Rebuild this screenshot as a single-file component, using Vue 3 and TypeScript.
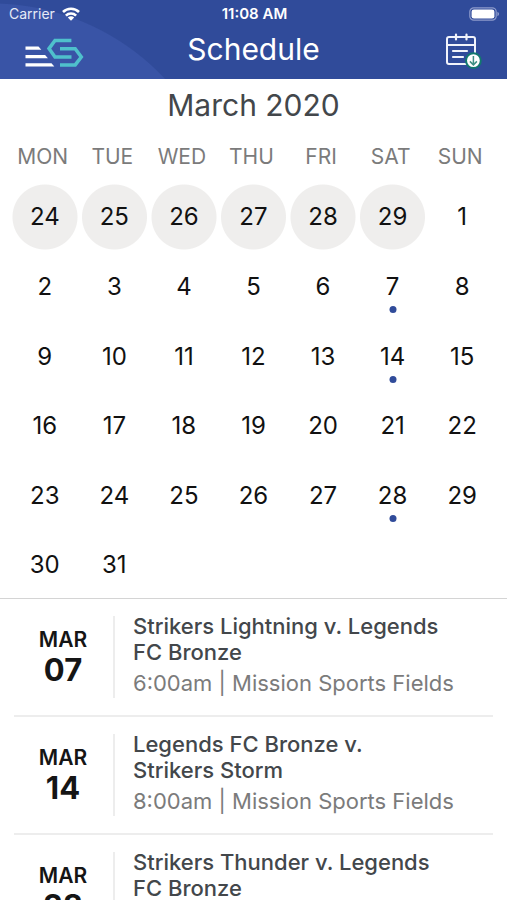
<script setup lang="ts">
interface Day {
  key: string
  label: number
  outside: boolean
  hasEvent: boolean
}

interface ScheduleEvent {
  month: string
  day: string
  title: string
  detail?: string
}

const weekdays: string[] = ['MON', 'TUE', 'WED', 'THU', 'FRI', 'SAT', 'SUN']
const eventDays: number[] = [7, 14, 28]

const previous: Day[] = [24, 25, 26, 27, 28, 29].map((n) => ({
  key: `feb-${n}`,
  label: n,
  outside: true,
  hasEvent: false,
}))

const current: Day[] = Array.from({ length: 31 }, (_, i) => ({
  key: `mar-${i + 1}`,
  label: i + 1,
  outside: false,
  hasEvent: eventDays.includes(i + 1),
}))

const days: Day[] = [...previous, ...current]
const weeks: Day[][] = []
for (let i = 0; i < days.length; i += 7) {
  weeks.push(days.slice(i, i + 7))
}

const events: ScheduleEvent[] = [
  {
    month: 'MAR',
    day: '07',
    title: 'Strikers Lightning v. Legends FC Bronze',
    detail: '6:00am | Mission Sports Fields',
  },
  {
    month: 'MAR',
    day: '14',
    title: 'Legends FC Bronze v. Strikers Storm',
    detail: '8:00am | Mission Sports Fields',
  },
  {
    month: 'MAR',
    day: '28',
    title: 'Strikers Thunder v. Legends FC Bronze',
  },
]
</script>

<template>
  <div class="screen">
    <header class="header">
      <div class="status">
        <div class="carrier">
          <span>Carrier</span>
          <svg width="18" height="14" viewBox="0 0 18 14" aria-hidden="true">
            <g fill="none" stroke="#fff" stroke-width="2.6">
              <path d="M1 5C5.4 .6 12.6 .6 17 5" />
              <path d="M3.9 8.6c2.8-2.8 7.4-2.8 10.2 0" />
            </g>
            <path d="M5.8 10.6c1.8-1.7 4.6-1.7 6.4 0L9 13.8z" fill="#fff" />
          </svg>
        </div>
        <span class="time">11:08 AM</span>
        <div class="battery">
          <svg width="31" height="14" viewBox="0 0 31 14" aria-hidden="true">
            <rect x=".8" y=".8" width="26.4" height="12.4" rx="4" fill="none" stroke="#8d9bcb" stroke-width="1.2" />
            <rect x="2.6" y="2.4" width="22.8" height="9.2" rx="2.4" fill="#fff" />
            <path d="M28.4 4.8c2.2.8 2.2 3.6 0 4.4z" fill="#8d9bcb" />
          </svg>
        </div>
      </div>
      <div class="nav">
        <a class="logo" href="#" aria-label="Home">
          <svg width="60" height="30" viewBox="0 0 60 30" aria-hidden="true">
            <g fill="#fff">
              <path d="M1.5 8.5h13l2.8 3.3H1.5z" />
              <path d="M1.5 16.9h19.6l2.8 3.3H1.5z" />
              <path d="M1.5 25.3h26l2.8 3.3H1.5z" />
            </g>
            <g fill="none" stroke="#4fc0cc" stroke-width="3.5">
              <path d="M47.4 2.4H31l-6 8.2 6 8.4H47.5" />
              <path d="M36 10.8H51.2l6.1 8.2-6.1 7.9H36" />
            </g>
          </svg>
        </a>
        <h1 class="title">Schedule</h1>
        <button class="export" type="button" aria-label="Download calendar">
          <svg width="38" height="38" viewBox="0 0 38 38" aria-hidden="true">
            <g fill="none" stroke="#f1f3fb" stroke-width="2" stroke-linecap="round">
              <rect x="2" y="5" width="28" height="27" rx="2" />
              <path d="M2 13h28M11 2.5v5M21.5 2.5v5M8 19h14M8 25h10" stroke-width="2.2" />
            </g>
            <circle cx="28.4" cy="28.6" r="7.4" fill="#fff" stroke="#12786f" stroke-width="2" />
            <path d="M28.4 24v8.6M24.9 29.4l3.5 3.5 3.5-3.5" fill="none" stroke="#3f8f83" stroke-width="1.5" />
          </svg>
        </button>
      </div>
    </header>

    <main class="main">
      <section class="calendar">
        <h2 class="month">March 2020</h2>
        <table class="grid">
          <thead>
            <tr>
              <th v-for="name in weekdays" :key="name" scope="col">{{ name }}</th>
            </tr>
          </thead>
          <tbody>
            <tr v-for="(week, index) in weeks" :key="index">
              <td v-for="day in week" :key="day.key">
                <button type="button" class="day" :class="{ outside: day.outside, marked: day.hasEvent }">
                  {{ day.label }}
                </button>
              </td>
            </tr>
          </tbody>
        </table>
      </section>

      <ul class="events">
        <li v-for="event in events" :key="event.day" class="event">
          <div class="date">
            <span class="date-month">{{ event.month }}</span>
            <span class="date-day">{{ event.day }}</span>
          </div>
          <div class="info">
            <h3 class="event-title">{{ event.title }}</h3>
            <p v-if="event.detail" class="event-detail">{{ event.detail }}</p>
          </div>
        </li>
      </ul>
    </main>
  </div>
</template>

<style>
body {
  margin: 0;
  background: #fff;
}
</style>

<style scoped>
.screen {
  display: flex;
  flex-direction: column;
  height: 100vh;
  overflow: hidden;
  background: #fff;
  font-family: Inter, 'Liberation Sans', sans-serif;
}

.header {
  flex: none;
  background: radial-gradient(circle at -9px 242px, #3954a6 238px, #304b9a 239px);
  color: #fff;
}

.status {
  display: grid;
  grid-template-columns: 1fr auto 1fr;
  align-items: center;
  height: 27px;
  padding: 0 7px 0 9px;
  font-size: 14px;
}

.carrier {
  display: flex;
  align-items: center;
  gap: 7px;
  color: #e6eaf6;
}

.time {
  font-size: 15px;
  font-weight: 600;
}

.battery {
  display: flex;
  justify-content: flex-end;
}

.nav {
  display: grid;
  grid-template-columns: 1fr auto 1fr;
  align-items: center;
  height: 52px;
  padding: 0 24px;
}

.logo {
  display: flex;
}

.title {
  margin: 0;
  padding-bottom: 8px;
  font-size: 30px;
  line-height: 36px;
  font-weight: 400;
}

.export {
  display: flex;
  justify-self: end;
  padding: 0 0 4px;
  border: 0;
  background: none;
  cursor: pointer;
}

.main {
  flex: 1;
  min-height: 0;
  overflow-y: auto;
  scrollbar-width: none;
}

.calendar {
  padding: 0 10px;
  border-bottom: 1px solid #d4d4d4;
}

.month {
  margin: 0;
  font-size: 30px;
  line-height: 52px;
  font-weight: 400;
  text-align: center;
  color: #43474b;
}

.grid {
  width: 100%;
  margin-bottom: -2px;
  table-layout: fixed;
  border-collapse: collapse;
}

.grid th {
  height: 51px;
  padding: 0 4px 0 0;
  font-size: 21px;
  font-weight: 400;
  color: #7b7b7b;
}

.grid td {
  padding: 0;
}

.day {
  position: relative;
  display: flex;
  align-items: center;
  justify-content: center;
  width: 100%;
  aspect-ratio: 1;
  padding: 0;
  border: 0;
  background: none;
  font: inherit;
  font-size: 24px;
  color: #111;
  cursor: pointer;
}

.day.outside {
  background: radial-gradient(circle, #efeeed 32px, transparent 33px);
}

.day.marked::after {
  content: '';
  position: absolute;
  bottom: 8px;
  left: 50%;
  width: 7px;
  height: 7px;
  border-radius: 50%;
  background: #304b9a;
  transform: translateX(-50%);
}

.events {
  margin: 0;
  padding: 0 14px;
  list-style: none;
}

.event {
  display: flex;
  padding: 17px 0;
  border-bottom: 2px solid #ededed;
}

.date {
  display: flex;
  flex: none;
  flex-direction: column;
  align-items: center;
  justify-content: center;
  box-sizing: border-box;
  width: 101px;
  min-height: 82px;
  padding-right: 1px;
  border-right: 2px solid #ededed;
  color: #151515;
}

.date-month {
  font-size: 21px;
  line-height: 26px;
  font-weight: 600;
}

.date-day {
  font-size: 31px;
  line-height: 34px;
  font-weight: 700;
}

.info {
  flex: 1;
  min-width: 0;
  margin-top: -3px;
  padding-left: 18px;
}

.event-title {
  margin: 0;
  padding-right: 48px;
  font-size: 22px;
  line-height: 26px;
  font-weight: 500;
  color: #43474b;
}

.event-detail {
  margin: 5px 0 0;
  font-size: 22px;
  line-height: 26px;
  color: #7b7b7b;
}
</style>
